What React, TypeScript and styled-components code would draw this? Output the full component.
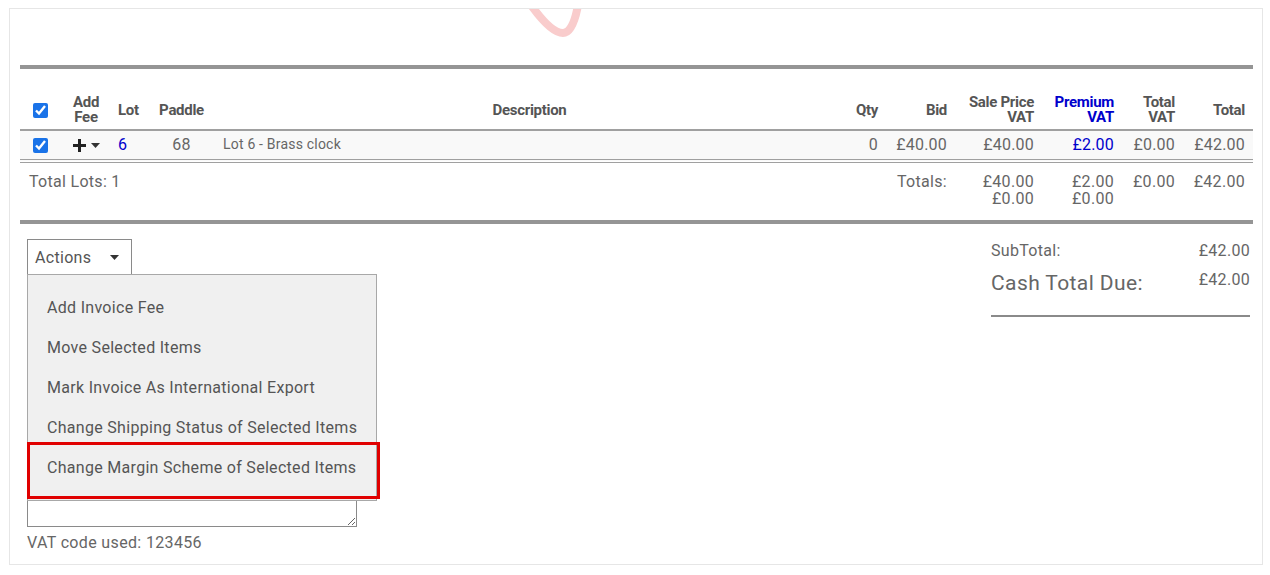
import styled, { createGlobalStyle } from "styled-components";

const GlobalStyle = createGlobalStyle`
  body {
    margin: 0;
    background: #fff;
    font-family: Roboto, "Liberation Sans", sans-serif;
    color: #666;
  }
`;

const Panel = styled.section`
  margin: 8px 7px 0 9px;
  border: 1px solid #e6e6e6;
  padding: 0 9px 14px 10px;
  height: 557px;
  box-sizing: border-box;
`;
const Header = styled.div`
  height: 56px;
  overflow: hidden;
  padding-left: 503px;
  & > svg {
    display: block;
  }
`;
const Bar = styled.div`
  height: 4px;
  background: #959595;
`;
const Table = styled.table`
  width: 100%;
  margin-top: 21px;
  border-collapse: collapse;
  table-layout: fixed;
`;
const Th = styled.th<{ $align?: string; $blue?: boolean }>`
  font-size: 15px;
  line-height: 15px;
  font-weight: 700;
  letter-spacing: -0.3px;
  color: ${(p) => (p.$blue ? "#0000cc" : "#555")};
  text-align: ${(p) => p.$align || "right"};
  padding: 5px 6px 4px;
  vertical-align: middle;
  border-bottom: 2px solid #a0a0a0;
`;
const Row = styled.tr`
  background: #f9f9f9;
`;
const Td = styled.td<{ $align?: string; $blue?: boolean; $small?: boolean }>`
  font-size: ${(p) => (p.$small ? "14px" : "16px")};
  line-height: 19px;
  letter-spacing: 0.2px;
  color: ${(p) => (p.$blue ? "#0000cc" : "#666")};
  text-align: ${(p) => p.$align || "right"};
  padding: 4px 6px 5px;
  border-bottom: 4px double #a0a0a0;
  white-space: nowrap;
`;
const FootTd = styled.td<{ $align?: string }>`
  font-size: 16px;
  line-height: 17px;
  letter-spacing: 0.3px;
  color: #666;
  text-align: ${(p) => p.$align || "right"};
  vertical-align: top;
  padding: 10px 6px 13px;
  white-space: nowrap;
`;
const Check = styled.input.attrs({ type: "checkbox", defaultChecked: true })`
  width: 15px;
  height: 15px;
  margin: 0;
  accent-color: #1a73e8;
  vertical-align: middle;
`;
const FeeButton = styled.span`
  display: inline-flex;
  align-items: center;
  gap: 4px;
  vertical-align: middle;
`;
const Lower = styled.div`
  display: flex;
  justify-content: space-between;
  margin-top: 15px;
`;
const Left = styled.div`
  padding-left: 7px;
  display: flex;
  flex-direction: column;
`;
const ActionsWrap = styled.div`
  position: relative;
`;
const ActionsButton = styled.button`
  display: flex;
  align-items: center;
  gap: 19px;
  height: 36px;
  padding: 0 12px 0 7px;
  background: #fff;
  border: 1px solid #8a8a8a;
  font-family: inherit;
  font-size: 16px;
  letter-spacing: 0.3px;
  color: #555;
`;
const Menu = styled.ul`
  position: absolute;
  top: 35px;
  left: 0;
  width: 350px;
  box-sizing: border-box;
  margin: 0;
  padding: 13px 0 12px;
  list-style: none;
  background: #f0f0f0;
  border: 1px solid #a8a8a8;
  z-index: 2;
`;
const MenuItem = styled.li`
  height: 40px;
  line-height: 40px;
  padding-left: 19px;
  font-size: 16px;
  letter-spacing: 0.3px;
  color: #555;
`;
const Highlight = styled.div`
  position: absolute;
  left: -1px;
  top: 167px;
  width: 353px;
  height: 57px;
  box-sizing: border-box;
  border: 3px solid #e00000;
  pointer-events: none;
`;
const Notes = styled.textarea`
  margin-top: 10px;
  width: 330px;
  height: 242px;
  box-sizing: border-box;
  border: 1px solid #8a8a8a;
  display: block;
`;
const VatCode = styled.div`
  margin-top: 6px;
  font-size: 16px;
  letter-spacing: 0.35px;
  color: #666;
`;
const Summary = styled.div`
  width: 259px;
  margin: 2px 3px 0 0;
`;
const SumRow = styled.div<{ $big?: boolean }>`
  display: flex;
  justify-content: space-between;
  align-items: flex-start;
  font-size: 16px;
  line-height: 20px;
  letter-spacing: 0.3px;
  color: #666;
  margin-bottom: ${(p) => (p.$big ? "19px" : "9px")};
  & > span:first-child {
    font-size: ${(p) => (p.$big ? "21px" : "16px")};
    line-height: ${(p) => (p.$big ? "26px" : "20px")};
    letter-spacing: ${(p) => (p.$big ? "0.4px" : "0.3px")};
  }
`;
const Rule = styled.div`
  height: 2px;
  background: #8a8a8a;
`;

const Logo = () => (
  <svg width="64" height="30" viewBox="0 0 64 30">
    <path
      d="M8 -4 Q28 24 40 24 Q50 24 55 -4"
      fill="none"
      stroke="#f9cccc"
      strokeWidth="8"
      strokeLinecap="round"
    />
  </svg>
);

const PlusCaret = () => (
  <FeeButton>
    <svg width="15" height="15" viewBox="0 0 15 15">
      <path d="M7.5 1v13M1 7.5h13" stroke="#222" strokeWidth="3" />
    </svg>
    <svg width="9" height="5" viewBox="0 0 9 5">
      <path d="M0 0h9L4.5 5z" fill="#333" />
    </svg>
  </FeeButton>
);

const menuItems = [
  "Add Invoice Fee",
  "Move Selected Items",
  "Mark Invoice As International Export",
  "Change Shipping Status of Selected Items",
  "Change Margin Scheme of Selected Items",
];

export default function App() {
  return (
    <>
      <GlobalStyle />
      <Panel>
        <Header>
          <Logo />
        </Header>
        <Bar />
        <Table>
          <colgroup>
            <col style={{ width: 40 }} />
            <col style={{ width: 52 }} />
            <col style={{ width: 38 }} />
            <col style={{ width: 63 }} />
            <col />
            <col style={{ width: 38 }} />
            <col style={{ width: 69 }} />
            <col style={{ width: 87 }} />
            <col style={{ width: 80 }} />
            <col style={{ width: 61 }} />
            <col style={{ width: 72 }} />
          </colgroup>
          <thead>
            <tr>
              <Th $align="center">
                <Check />
              </Th>
              <Th $align="center">
                Add
                <br />
                Fee
              </Th>
              <Th $align="left">Lot</Th>
              <Th $align="center">Paddle</Th>
              <Th $align="center">Description</Th>
              <Th>Qty</Th>
              <Th>Bid</Th>
              <Th>
                Sale Price
                <br />
                VAT
              </Th>
              <Th $blue>
                Premium
                <br />
                VAT
              </Th>
              <Th>
                Total
                <br />
                VAT
              </Th>
              <Th style={{ paddingRight: 8 }}>Total</Th>
            </tr>
          </thead>
          <tbody>
            <Row>
              <Td $align="center">
                <Check />
              </Td>
              <Td $align="center">
                <PlusCaret />
              </Td>
              <Td $align="left" $blue>
                6
              </Td>
              <Td $align="center">68</Td>
              <Td $align="left" $small style={{ paddingLeft: 10 }}>
                Lot 6 - Brass clock
              </Td>
              <Td>0</Td>
              <Td>£40.00</Td>
              <Td>£40.00</Td>
              <Td $blue>£2.00</Td>
              <Td>£0.00</Td>
              <Td style={{ paddingRight: 8 }}>£42.00</Td>
            </Row>
          </tbody>
          <tfoot>
            <tr>
              <FootTd colSpan={5} $align="left" style={{ paddingLeft: 9 }}>
                Total Lots: 1
              </FootTd>
              <FootTd />
              <FootTd>Totals:</FootTd>
              <FootTd>
                £40.00
                <br />
                £0.00
              </FootTd>
              <FootTd>
                £2.00
                <br />
                £0.00
              </FootTd>
              <FootTd>£0.00</FootTd>
              <FootTd style={{ paddingRight: 8 }}>£42.00</FootTd>
            </tr>
          </tfoot>
        </Table>
        <Bar />
        <Lower>
          <Left>
            <ActionsWrap>
              <ActionsButton>
                Actions
                <svg width="9" height="5" viewBox="0 0 9 5">
                  <path d="M0 0h9L4.5 5z" fill="#333" />
                </svg>
              </ActionsButton>
              <Menu>
                {menuItems.map((m) => (
                  <MenuItem key={m}>{m}</MenuItem>
                ))}
                <Highlight />
              </Menu>
            </ActionsWrap>
            <Notes />
            <VatCode>VAT code used: 123456</VatCode>
          </Left>
          <Summary>
            <SumRow>
              <span>SubTotal:</span>
              <span>£42.00</span>
            </SumRow>
            <SumRow $big>
              <span>Cash Total Due:</span>
              <span>£42.00</span>
            </SumRow>
            <Rule />
          </Summary>
        </Lower>
      </Panel>
    </>
  );
}
